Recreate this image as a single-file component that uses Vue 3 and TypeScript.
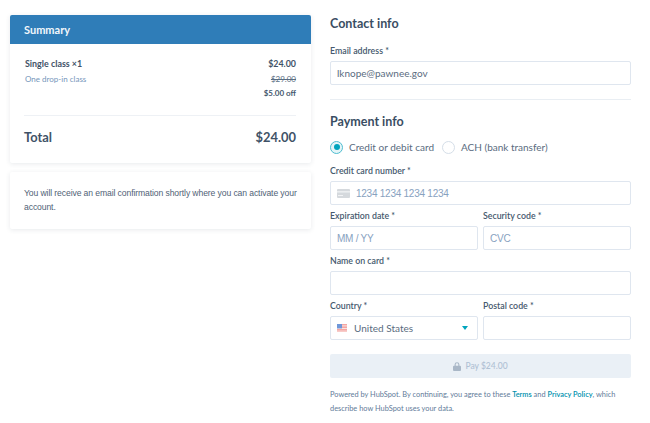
<script setup lang="ts">
const title = 'Summary'
</script>

<template>
  <div class="page">
    <aside class="left">
      <section class="card">
        <header class="card-head">{{ title }}</header>
        <div class="card-body">
          <div class="row main"><span>Single class ×1</span><span>$24.00</span></div>
          <div class="row sub"><span class="desc">One drop-in class</span><s class="old">$29.00</s></div>
          <div class="off">$5.00 off</div>
          <div class="rule"></div>
          <div class="row total"><span>Total</span><span>$24.00</span></div>
        </div>
      </section>
      <section class="card note">
        You will receive an email confirmation shortly where you can activate your account.
      </section>
    </aside>
    <main class="right">
      <h2 class="h">Contact info</h2>
      <label class="lbl email-lbl">Email address *</label>
      <div class="field value">lknope@pawnee.gov</div>
      <div class="divider"></div>
      <h2 class="h">Payment info</h2>
      <div class="radios">
        <span class="radio on"><i></i></span><span class="r-text">Credit or debit card</span>
        <span class="radio"></span><span class="r-text">ACH (bank transfer)</span>
      </div>
      <label class="lbl card-lbl">Credit card number *</label>
      <div class="field ph">
        <svg class="cc" width="13" height="9" viewBox="0 0 13 9">
          <rect width="13" height="9" rx="1" fill="#d5d9dd" />
          <rect y="2" width="13" height="1.6" fill="#eceef0" />
          <rect x="1" y="6" width="5" height="1" fill="#f2f3f5" />
        </svg>
        <span>1234 1234 1234 1234</span>
      </div>
      <div class="two">
        <div><label class="lbl">Expiration date *</label><div class="field ph"><span>MM / YY</span></div></div>
        <div><label class="lbl">Security code *</label><div class="field ph"><span>CVC</span></div></div>
      </div>
      <label class="lbl">Name on card *</label>
      <div class="field"></div>
      <div class="two">
        <div>
          <label class="lbl">Country *</label>
          <div class="field value country">
            <svg class="flag" width="10" height="8" viewBox="0 0 10 8">
              <rect width="10" height="8" fill="#f4a6a3" />
              <rect y="1.4" width="10" height="1" fill="#fbe3e2" />
              <rect y="4" width="10" height="1" fill="#fbe3e2" />
              <rect y="6.6" width="10" height="1" fill="#fbe3e2" />
              <rect width="5" height="4.4" fill="#6f97d9" />
            </svg>
            <span>United States</span>
            <b class="caret"></b>
          </div>
        </div>
        <div><label class="lbl">Postal code *</label><div class="field"></div></div>
      </div>
      <div class="pay">
        <svg width="8" height="9" viewBox="0 0 8 9">
          <path d="M1.6 4V2.6a2.4 2.4 0 0 1 4.8 0V4H5.3V2.6a1.3 1.3 0 0 0-2.6 0V4z" fill="#a9b7c7" />
          <rect y="3.8" width="8" height="5.2" rx="1" fill="#a9b7c7" />
        </svg>
        <span>Pay $24.00</span>
      </div>
      <p class="legal">
        Powered by HubSpot. By continuing, you agree to these <a>Terms</a> and <a>Privacy Policy</a>, which<br />describe how HubSpot uses your data.
      </p>
    </main>
  </div>
</template>

<style>
html, body { margin: 0; background: #fff; }
</style>

<style scoped>
.page {
  width: 650px;
  height: 423px;
  box-sizing: border-box;
  padding: 15px 19px 0 10px;
  display: flex;
  gap: 19px;
  font-family: Lato, "Liberation Sans", sans-serif;
  color: #33475b;
  overflow: hidden;
}
.left { width: 301px; flex: none; display: flex; flex-direction: column; gap: 9px; }
.right { width: 301px; flex: none; }
.card {
  background: #fff;
  border-radius: 2px;
  box-shadow: 0 1px 5px rgba(45, 62, 80, 0.11);
}
.card-head {
  height: 29px;
  line-height: 30px;
  padding-left: 14px;
  background: #2f7db8;
  color: #f2f7fb;
  font-size: 11px;
  font-weight: 700;
  border-radius: 2px 2px 0 0;
}
.card-body { padding: 13px 15px 13px 14px; height: 119px; box-sizing: border-box; }
.row { display: flex; justify-content: space-between; align-items: baseline; }
.main { font-size: 8.9px; font-weight: 700; line-height: 14px; padding-left: 1px; color: #3f5267; }
.sub { font-size: 8px; line-height: 14px; margin-top: 1px; padding-left: 1px; }
.desc { color: #7596bb; }
.old { color: #5a6e83; }
.off { font-size: 8px; font-weight: 700; line-height: 14px; text-align: right; color: #46596e; }
.rule { height: 1px; background: #eef1f5; margin: 15px 0 0; }
.total { font-size: 12.9px; font-weight: 700; margin-top: 12px; line-height: 18px; color: #3f5267; }
.note {
  height: 57px;
  box-sizing: border-box;
  padding: 14px 10px 0 14px;
  font: 8.6px/14px "Liberation Sans", sans-serif;
  letter-spacing: -0.1px;
  color: #4f6276;
}
.h { margin: 1px 0 0; font-size: 12.5px; font-weight: 700; line-height: 16px; color: #3a4e63; }
.lbl { display: block; font-size: 8.8px; font-weight: 600; line-height: 12px; margin: 5px 0 4px; color: #46596e; }
.email-lbl { margin-top: 13px; }
.field {
  box-sizing: border-box;
  height: 24px;
  border: 1px solid #dfe6ef;
  border-radius: 2px;
  background: #fff;
  display: flex;
  align-items: center;
  padding: 0 6px;
  font-size: 10px;
}
.value { color: #5a6c80; }
.ph { font-family: "Liberation Sans", sans-serif; color: #88a2bf; font-size: 10px; letter-spacing: -0.25px; }
.cc { margin-right: 6px; }
.divider { height: 1px; background: #e9eef3; margin: 14px 0 14px; }
.radios { display: flex; align-items: center; margin-top: 10px; font-size: 10px; color: #5a6c80; height: 14px; }
.radio {
  box-sizing: border-box;
  width: 13px;
  height: 13px;
  border: 1px solid #d5dee8;
  border-radius: 50%;
  display: flex;
  align-items: center;
  justify-content: center;
  margin-right: 6px;
}
.radio.on { border-color: #4fbdd0; background: #e5f5f8; }
.radio.on i { width: 6px; height: 6px; border-radius: 50%; background: #00a4bd; display: block; }
.r-text { margin-right: 8px; }
.card-lbl { margin-top: 11px; }
.two { display: grid; grid-template-columns: 148px 148px; gap: 5px; }
.country .flag { margin-right: 7px; }
.caret {
  margin-left: auto;
  margin-right: 3px;
  border-left: 3.5px solid transparent;
  border-right: 3.5px solid transparent;
  border-top: 4px solid #00a4bd;
}
.pay {
  height: 24px;
  margin-top: 14px;
  background: #eaf0f6;
  border-radius: 2px;
  display: flex;
  align-items: center;
  justify-content: center;
  gap: 4px;
  font-size: 8.5px;
  font-weight: 500;
  color: #b0c1d4;
}
.legal { margin: 10px 0 0; font-size: 7.4px; line-height: 14px; color: #5f7b99; }
.legal a { color: #0091ae; font-weight: 600; }
</style>
